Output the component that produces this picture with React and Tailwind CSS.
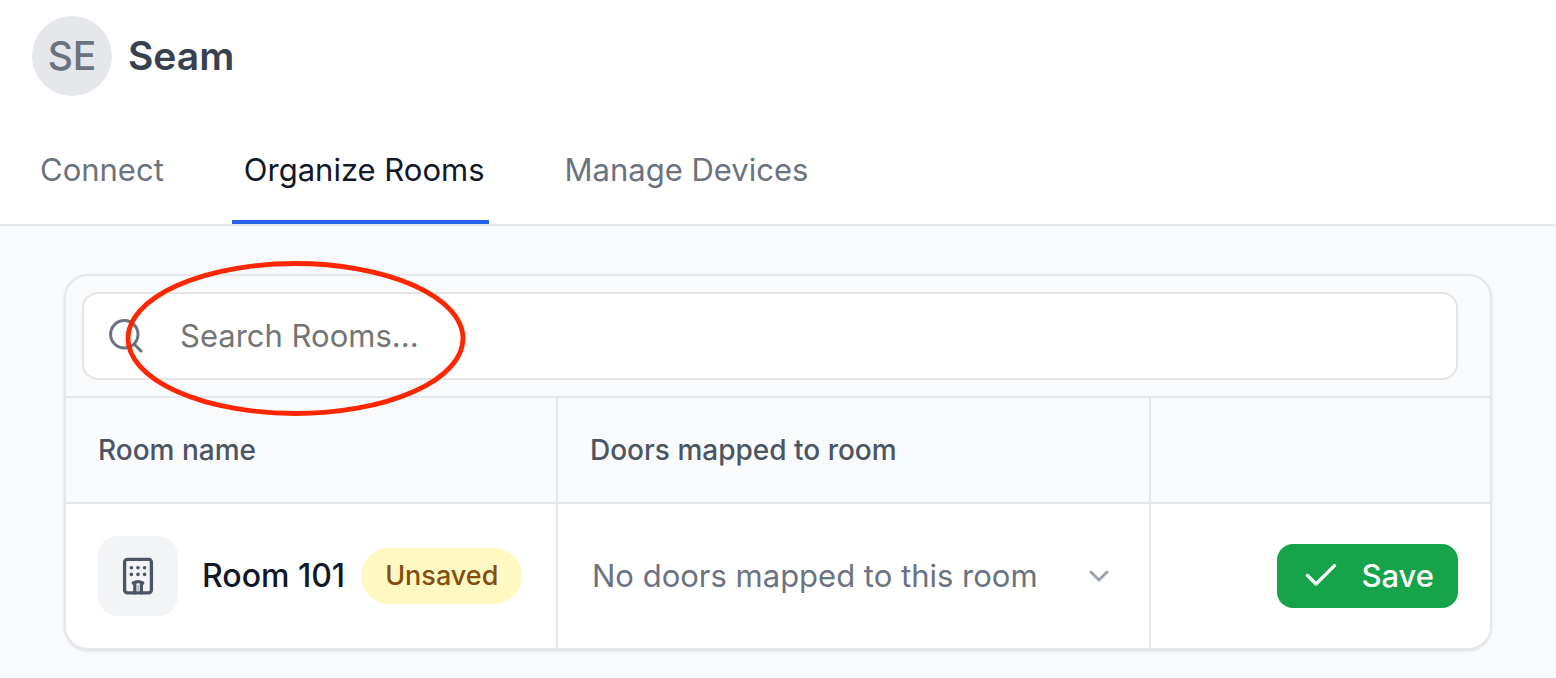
import React from "react";

function SearchIcon() {
  return (
    <svg className="size-10 shrink-0" viewBox="0 0 40 40" fill="none" stroke="#6b7280" strokeWidth="3" strokeLinecap="round" aria-hidden="true">
      <circle cx="18.3" cy="18.3" r="13.7" />
      <path d="M28.3 28.3 L35 35" />
    </svg>
  );
}

function BuildingIcon() {
  return (
    <svg className="size-10" viewBox="0 0 40 40" fill="none" aria-hidden="true">
      <rect x="6.6" y="3.3" width="26.8" height="33.6" rx="2.8" stroke="#4b5563" strokeWidth="3.3" />
      <g fill="#4b5563">
        <circle cx="13.4" cy="11.8" r="1.8" />
        <circle cx="20" cy="11.8" r="1.8" />
        <circle cx="26.6" cy="11.8" r="1.8" />
        <circle cx="13.4" cy="18.4" r="1.8" />
        <circle cx="20" cy="18.4" r="1.8" />
        <circle cx="26.6" cy="18.4" r="1.8" />
      </g>
      <path d="M15.2 27 Q20 24.4 24.8 27 M16.8 27 V37 M23.4 27 V37" stroke="#4b5563" strokeWidth="3.2" strokeLinecap="round" />
      <path d="M20.1 29 V35.5" stroke="#8b929d" strokeWidth="1" />
    </svg>
  );
}

function Tab({ children, active }) {
  return (
    <a
      href="#"
      aria-current={active ? "page" : undefined}
      className={
        active
          ? "border-b-4 border-[#2563eb] pt-[18px] pr-1 pb-[30px] pl-3 text-[#111827]"
          : "border-b-4 border-transparent pt-[18px] pr-1 pb-[30px] pl-3 text-[#6b7280]"
      }
    >
      {children}
    </a>
  );
}

export default function App() {
  return (
    <div className="min-h-screen bg-[#f9fafb] font-['Inter',sans-serif] text-[31px] leading-10">
      <header className="border-b-2 border-[#e5e7eb] bg-white">
        <div className="flex items-center gap-4 px-8 pt-4">
          <div className="flex size-20 items-center justify-center rounded-full bg-[#e5e7eb] text-[39px] font-medium text-[#6b7280]">
            SE
          </div>
          <h1 className="text-[39px] font-semibold text-[#374151]">Seam</h1>
        </div>
        <nav className="mt-9 flex gap-16 px-7">
          <Tab>Connect</Tab>
          <Tab active>Organize Rooms</Tab>
          <Tab>Manage Devices</Tab>
        </nav>
      </header>

      <main className="px-16 py-12">
        <section className="relative rounded-3xl border-2 border-[#e5e7eb] shadow-sm">
          <div className="border-b-2 border-[#e5e7eb] py-4 pr-8 pl-4">
            <label className="flex h-22 items-center gap-[34px] rounded-2xl border-2 border-[#e5e5e5] bg-white px-[22px]">
              <SearchIcon />
              <input
                type="search"
                aria-label="Search rooms"
                placeholder="Search Rooms..."
                className="min-w-0 flex-1 bg-transparent outline-none placeholder:text-[#757575]"
              />
            </label>
          </div>

          <table className="w-full table-fixed border-separate border-spacing-0">
            <thead>
              <tr className="h-[106px] text-left text-[28px] text-[#4b5563]">
                <th className="w-[492px] border-r-2 border-b-2 border-[#e5e7eb] px-8 font-medium">Room name</th>
                <th className="w-[593px] border-r-2 border-b-2 border-[#e5e7eb] px-8 font-medium">Doors mapped to room</th>
                <th className="border-b-2 border-[#e5e7eb]" aria-label="Actions" />
              </tr>
            </thead>
            <tbody>
              <tr className="h-36">
                <td className="rounded-bl-[22px] border-r-2 border-[#e5e7eb] bg-white px-8">
                  <div className="flex items-center whitespace-nowrap">
                    <span className="flex size-20 shrink-0 items-center justify-center rounded-[20px] bg-[#f3f4f6]">
                      <BuildingIcon />
                    </span>
                    <span className="ml-6 text-[32px] font-medium text-[#111827]">Room 101</span>
                    <span className="ml-4 rounded-full bg-[#fef9c3] px-6 py-2 text-[27px] font-medium text-[#854d0e]">
                      Unsaved
                    </span>
                  </div>
                </td>
                <td className="border-r-2 border-[#e5e7eb] bg-white px-8">
                  <div className="flex items-center pr-2">
                    <select aria-label="Doors mapped to Room 101" className="min-w-0 flex-1 appearance-none bg-transparent pl-0.5 text-[#6b7280] outline-none">
                      <option>No doors mapped to this room</option>
                    </select>
                    <svg className="pointer-events-none h-3 w-5" viewBox="0 0 20 12" fill="none" stroke="#9ca3af" strokeWidth="3" strokeLinecap="round" strokeLinejoin="round" aria-hidden="true">
                      <path d="M2 2 L10 10 L18 2" />
                    </svg>
                  </div>
                </td>
                <td className="rounded-br-[22px] bg-white px-8">
                  <button type="button" className="ml-auto flex h-16 items-center gap-6 rounded-2xl bg-[#16a34a] pr-6 pl-7 font-medium text-white">
                    <svg className="h-6 w-8" viewBox="0 0 32 24" fill="none" stroke="currentColor" strokeWidth="3.3" strokeLinecap="round" strokeLinejoin="round" aria-hidden="true">
                      <path d="M2.5 11.5 L11 20 L29.5 1.7" />
                    </svg>
                    Save
                  </button>
                </td>
              </tr>
            </tbody>
          </table>

          <svg className="pointer-events-none absolute -top-4 left-14 h-40 w-86" viewBox="0 0 344 160" fill="none" aria-hidden="true">
            <ellipse cx="173.5" cy="78.5" rx="167.5" ry="75" stroke="#ff2600" strokeWidth="4.8" />
          </svg>
        </section>
      </main>
    </div>
  );
}
